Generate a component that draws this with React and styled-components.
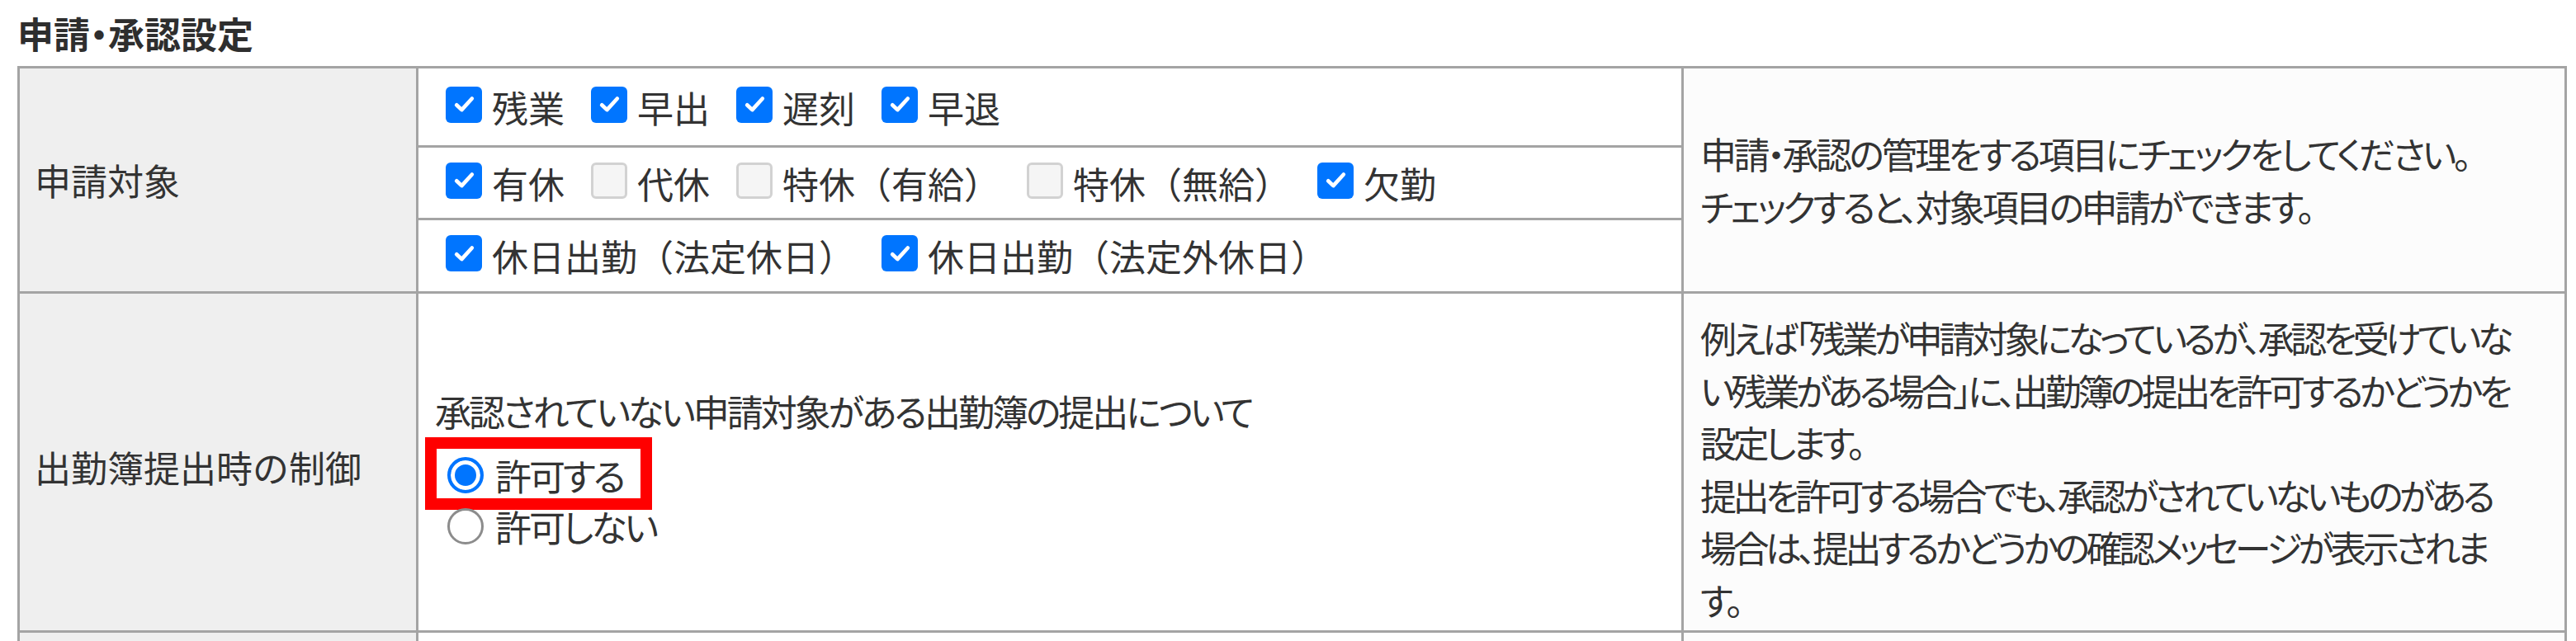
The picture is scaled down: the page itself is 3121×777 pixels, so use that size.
import React from 'react';
import styled, { createGlobalStyle } from 'styled-components';

const GlobalStyle = createGlobalStyle`
    body {
        margin: 0;
        background: #ffffff;
        color: #333333;
        font-family: "Noto Sans CJK JP", "Noto Sans", sans-serif;
    }
`

const Page = styled.div`
    padding: 8px 0 0 21px;
`

const Title = styled.h2`
    margin: 0 0 8px 0;
    font-size: 44px;
    line-height: 64px;
    font-weight: 700;
    font-feature-settings: "palt";
    color: #2e2e2e;
`

const Grid = styled.div`
    display: grid;
    grid-template-columns: 483px 1533px 1070px;
    width: max-content;
    border-top: 3px solid #a4a4a4;
    border-left: 3px solid #a4a4a4;
`

const Cell = styled.div`
    box-sizing: border-box;
    border-right: 3px solid #a4a4a4;
    border-bottom: 3px solid #a4a4a4;
    font-size: 44px;
    line-height: 64px;
`

const LabelCell = styled(Cell)`
    background: #efefef;
    display: flex;
    align-items: center;
    padding: ${p => p.$shift || 0}px 0 0 18px;
`

const OptionsCell = styled(Cell)`
    display: flex;
    flex-direction: column;
`

const SubRow = styled.div`
    box-sizing: border-box;
    height: ${p => p.$h}px;
    display: flex;
    align-items: center;
    padding-left: 33px;
    border-bottom: ${p => p.$last ? 'none' : '3px solid #a4a4a4'};
`

const CheckItem = styled.label`
    display: flex;
    align-items: center;
    margin-right: 32px;
    white-space: nowrap;
`

const Box = styled.span`
    box-sizing: border-box;
    width: 44px;
    height: 44px;
    border-radius: 6px;
    margin-right: 12px;
    margin-top: -6px;
    display: inline-flex;
    align-items: center;
    justify-content: center;
    background: ${p => p.$on ? '#0075ff' : '#f5f5f5'};
    border: ${p => p.$on ? 'none' : '3px solid #d2d2d2'};
`

const NoteCell = styled(Cell)`
    background: #fcfcfc;
    display: flex;
    flex-direction: column;
    justify-content: ${p => p.$center ? 'center' : 'flex-start'};
    padding: ${p => p.$center ? '0 20px' : '22px 20px 5px 20px'};
    font-feature-settings: "palt";
    letter-spacing: ${p => p.$ls || 0}px;
`

const Line = styled.div`
    white-space: nowrap;
    line-height: ${p => p.$lh || 64}px;
`

const RuleCell = styled(Cell)`
    display: flex;
    flex-direction: column;
    justify-content: center;
    padding: 15px 0 0 20px;
    font-feature-settings: "palt";
    letter-spacing: -3px;
`

const RadioGroup = styled.div`
    margin-top: 15px;
    padding-left: 15px;
`

const RadioOption = styled.label`
    position: relative;
    display: flex;
    align-items: center;
    height: 62px;
    width: max-content;
    white-space: nowrap;
`

/* red annotation frame drawn over the first option */
const Marker = styled.span`
    position: absolute;
    left: -27px;
    top: -15px;
    width: 275px;
    height: 88px;
    box-sizing: border-box;
    border: 14px solid #ff0000;
    pointer-events: none;
`

const Dot = styled.span`
    box-sizing: border-box;
    width: 44px;
    height: 44px;
    border-radius: 50%;
    margin-right: 14px;
    background: ${p => p.$on ? '#0075ff' : '#ffffff'};
    border: ${p => p.$on ? '4px solid #0075ff' : '3px solid #8c8c8c'};
    box-shadow: ${p => p.$on ? 'inset 0 0 0 5px #ffffff' : 'none'};
`

const BlankCell = styled(Cell)`
    height: 90px;
    background: ${p => p.$bg || '#ffffff'};
`

const targets = [
    [['残業', true], ['早出', true], ['遅刻', true], ['早退', true]],
    [['有休', true], ['代休', false], ['特休（有給）', false], ['特休（無給）', false], ['欠勤', true]],
    [['休日出勤（法定休日）', true], ['休日出勤（法定外休日）', true]],
]

const subHeights = [96, 88, 86]

const note1 = [
    '申請・承認の管理をする項目にチェックをしてください。',
    'チェックすると、対象項目の申請ができます。',
]

const note2 = [
    '例えば「残業が申請対象になっているが、承認を受けていな',
    'い残業がある場合」に、出勤簿の提出を許可するかどうかを',
    '設定します。',
    '提出を許可する場合でも、承認がされていないものがある',
    '場合は、提出するかどうかの確認メッセージが表示されま',
    'す。',
]

function Check({ on }) {
    return (
        <Box $on={on}>
            {on && (
                <svg width="31" height="31" viewBox="0 0 16 16">
                    <path d="M3.2 8.4 L6.4 11.4 L12.8 4.4" fill="none" stroke="#ffffff" strokeWidth="2.4" strokeLinecap="round" strokeLinejoin="round" />
                </svg>
            )}
        </Box>
    )
}

export default function App() {
    return (
        <>
        <GlobalStyle />
        <Page>
            <Title>申請・承認設定</Title>
            <Grid>
                <LabelCell>申請対象</LabelCell>
                <OptionsCell>
                    {targets.map((row, i) => (
                        <SubRow key={i} $h={subHeights[i]} $last={i === targets.length - 1}>
                            {row.map(([name, on]) => (
                                <CheckItem key={name}>
                                    <Check on={on} />
                                    {name}
                                </CheckItem>
                            ))}
                        </SubRow>
                    ))}
                </OptionsCell>
                <NoteCell $center $ls={-3.5}>
                    {note1.map(t => <Line key={t}>{t}</Line>)}
                </NoteCell>

                <LabelCell $shift={12}>出勤簿提出時の制御</LabelCell>
                <RuleCell>
                    <Line>承認されていない申請対象がある出勤簿の提出について</Line>
                    <RadioGroup>
                        <RadioOption>
                            <Dot $on />
                            許可する
                            <Marker />
                        </RadioOption>
                        <RadioOption>
                            <Dot />
                            許可しない
                        </RadioOption>
                    </RadioGroup>
                </RuleCell>
                <NoteCell $ls={-4.5}>
                    {note2.map(t => <Line key={t} $lh={63.5}>{t}</Line>)}
                </NoteCell>

                <BlankCell $bg="#efefef" />
                <BlankCell />
                <BlankCell $bg="#fcfcfc" />
            </Grid>
        </Page>
        </>
    )
}
